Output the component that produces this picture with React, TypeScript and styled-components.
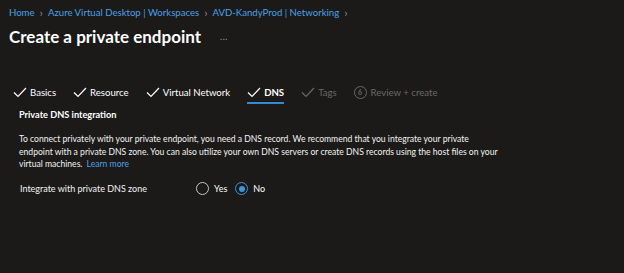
import React from 'react';
import styled, { createGlobalStyle } from 'styled-components';

const GlobalStyle = createGlobalStyle`
  html, body {
    margin: 0;
    padding: 0;
    background: #1b1a19;
  }
  body {
    font-family: "Segoe UI", Lato, "Noto Sans", sans-serif;
    color: #ffffff;
  }
`;

const tabs = [
    { label: 'Basics', state: 'done' },
    { label: 'Resource', state: 'done' },
    { label: 'Virtual Network', state: 'done' },
    { label: 'DNS', state: 'active' },
    { label: 'Tags', state: 'disabled' },
    { label: 'Review + create', state: 'disabled', step: 6 },
];

const crumbs = ['Home', 'Azure Virtual Desktop | Workspaces', 'AVD-KandyProd | Networking'];

const Check = ({ muted }: { muted?: boolean }) => (
    <svg width="14" height="11" viewBox="0 0 14 11">
        <path d="M1 5.5 L5 9.5 L13 1" fill="none" stroke={muted ? '#6a6867' : '#ffffff'} strokeWidth="1.2" />
    </svg>
);

const App = () => {
    return (
        <Page>
            <GlobalStyle />
            <Breadcrumb>
                {crumbs.map((c) => (
                    <React.Fragment key={c}>
                        <Crumb>{c}</Crumb>
                        <Chevron>›</Chevron>
                    </React.Fragment>
                ))}
            </Breadcrumb>
            <TitleRow>
                <Title>Create a private endpoint</Title>
                <More>...</More>
            </TitleRow>

            <TabBar>
                {tabs.map((t) => (
                    <Tab key={t.label} $active={t.state === 'active'} $disabled={t.state === 'disabled'}>
                        {t.step ? <StepCircle>{t.step}</StepCircle> : <Check muted={t.state === 'disabled'} />}
                        <span>{t.label}</span>
                    </Tab>
                ))}
            </TabBar>

            <Section>
                <SectionTitle>Private DNS integration</SectionTitle>
                <Description>
                    To connect privately with your private endpoint, you need a DNS record. We recommend that you integrate your private
                    <br />
                    endpoint with a private DNS zone. You can also utilize your own DNS servers or create DNS records using the host files on your
                    <br />
                    virtual machines. <Link>Learn more</Link>
                </Description>
                <FieldRow>
                    <FieldLabel>Integrate with private DNS zone</FieldLabel>
                    <RadioGroup>
                        <RadioOption>
                            <Radio />
                            Yes
                        </RadioOption>
                        <RadioOption>
                            <Radio $checked />
                            No
                        </RadioOption>
                    </RadioGroup>
                </FieldRow>
            </Section>
        </Page>
    );
};

export default App;

const Page = styled.div`
  width: 624px;
  height: 273px;
  background: #1b1a19;
  padding: 5px 0 0 9px;
  box-sizing: border-box;
  overflow: hidden;
`;

const Breadcrumb = styled.div`
  display: flex;
  align-items: center;
  gap: 5px;
  font-size: 9.6px;
  line-height: 16px;
`;

const Crumb = styled.span`
  color: #4aa0e6;
`;

const Chevron = styled.span`
  color: #8a8886;
  font-size: 12px;
`;

const TitleRow = styled.div`
  display: flex;
  align-items: center;
  margin-top: 3px;
  height: 24px;
`;

const Title = styled.h1`
  margin: 0;
  font-size: 17px;
  font-weight: 700;
  color: #ffffff;
`;

const More = styled.span`
  margin-left: 19px;
  color: #a19f9d;
  font-size: 9px;
  letter-spacing: 0.5px;
`;

const TabBar = styled.div`
  display: flex;
  align-items: stretch;
  gap: 17px;
  margin-top: 34px;
  padding-left: 4px;
  height: 22px;
`;

const Tab = styled.div<{ $active?: boolean; $disabled?: boolean }>`
  display: flex;
  align-items: center;
  gap: 3px;
  font-size: 9.6px;
  font-weight: ${(p) => (p.$active ? 700 : 400)};
  color: ${(p) => (p.$disabled ? '#6a6867' : '#ffffff')};
  border-bottom: 2px solid ${(p) => (p.$active ? '#2f8ad8' : 'transparent')};
  box-sizing: border-box;
`;

const StepCircle = styled.span`
  width: 11px;
  height: 11px;
  border: 1px solid #6a6867;
  border-radius: 50%;
  font-size: 7px;
  font-weight: 700;
  display: flex;
  align-items: center;
  justify-content: center;
  margin-right: 1px;
`;

const Section = styled.div`
  padding-left: 10px;
  margin-top: 3px;
`;

const SectionTitle = styled.div`
  font-size: 9.2px;
  font-weight: 700;
  line-height: 16px;
`;

const Description = styled.p`
  margin: 10px 0 0;
  white-space: nowrap;
  font-size: 8.6px;
  line-height: 12.5px;
  color: #f3f2f1;
`;

const Link = styled.span`
  color: #4aa0e6;
  margin-left: 2px;
`;

const FieldRow = styled.div`
  display: flex;
  align-items: center;
  margin-top: 11px;
  padding-left: 1px;
  height: 14px;
  font-size: 9px;
`;

const FieldLabel = styled.div`
  width: 176px;
  color: #f3f2f1;
`;

const RadioGroup = styled.div`
  display: flex;
  align-items: center;
  gap: 8px;
`;

const RadioOption = styled.label`
  display: flex;
  align-items: center;
  gap: 5px;
  color: #ffffff;
`;

const Radio = styled.span<{ $checked?: boolean }>`
  width: 13px;
  height: 13px;
  box-sizing: border-box;
  border-radius: 50%;
  border: 1.3px solid ${(p) => (p.$checked ? '#3a96dd' : '#c8c6c4')};
  display: flex;
  align-items: center;
  justify-content: center;
  &::after {
    content: '';
    width: 6px;
    height: 6px;
    border-radius: 50%;
    background: ${(p) => (p.$checked ? '#3a96dd' : 'transparent')};
  }
`;
